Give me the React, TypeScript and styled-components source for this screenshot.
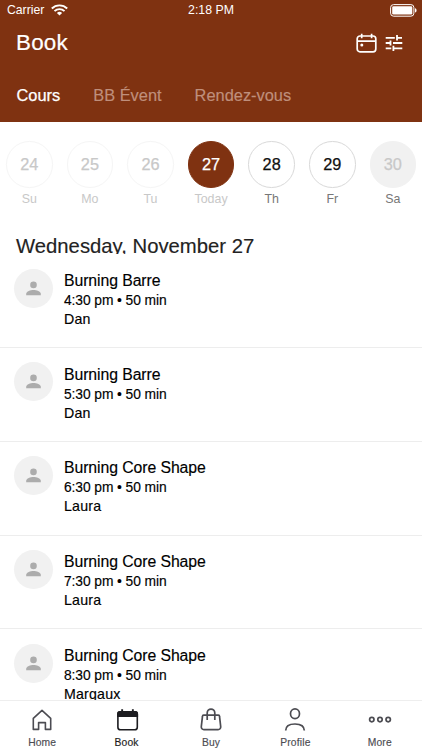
import React from "react";
import styled, { createGlobalStyle } from "styled-components";

const GlobalStyle = createGlobalStyle`
  * { box-sizing: border-box; }
  body { margin: 0; background: #fff; }
`;

const Screen = styled.div`
  width: 422px;
  height: 750px;
  display: flex;
  flex-direction: column;
  overflow: hidden;
  background: #fff;
  color: #111;
  font-family: "Liberation Sans", Arial, sans-serif;
  white-space: nowrap;
`;

const Header = styled.header`
  flex: none;
  height: 122px;
  background: #7f3211;
  color: #fff;
`;

const StatusBar = styled.div`
  height: 20px;
  padding: 0 5px 0 7px;
  display: grid;
  grid-template-columns: 1fr auto 1fr;
  align-items: center;
  font-size: 12.2px;
  line-height: 20px;
`;

const Carrier = styled.div`
  display: flex;
  align-items: center;
  gap: 7px;
`;

const Clock = styled.div`
  font-size: 12.3px;
  margin-right: 2px;
`;

const Battery = styled.div`
  justify-self: end;
  display: flex;
`;

const TitleBar = styled.div`
  height: 46px;
  padding: 0 19px 0 16px;
  display: flex;
  align-items: center;
  justify-content: space-between;
`;

const Title = styled.h1`
  margin: 0;
  font-size: 22.4px;
  font-weight: 400;
  letter-spacing: 0.2px;
  line-height: 26px;
  -webkit-text-stroke: 0.2px #fff;
`;

const Actions = styled.div`
  display: flex;
  align-items: center;
  gap: 8px;
  padding-bottom: 1px;
`;

const Tabs = styled.nav`
  height: 56px;
  padding: 19px 0 0 16.5px;
  display: flex;
  gap: 33px;
`;

const Tab = styled.span<{ $active?: boolean; $spacing?: number }>`
  font-size: 16.4px;
  line-height: 20px;
  letter-spacing: ${(p) => p.$spacing ?? 0}px;
  color: ${(p) => (p.$active ? "#fff" : "#bf8f7c")};
  -webkit-text-stroke: ${(p) => (p.$active ? "0.25px #fff" : "0.15px #bf8f7c")};
`;

const Week = styled.div`
  flex: none;
  height: 112px;
  padding-top: 19px;
  margin-left: -1px;
  display: grid;
  grid-template-columns: repeat(7, 60.6px);
`;

const Day = styled.div`
  display: flex;
  flex-direction: column;
  align-items: center;
`;

type DayKind = "past" | "today" | "open" | "closed";

const circleColors: Record<DayKind, [string, string, string]> = {
  past: ["#fff", "#f5f5f5", "#c8c8c8"],
  today: ["#7f3211", "#7f3211", "#fff"],
  open: ["#fff", "#d9d9d9", "#111"],
  closed: ["#f1f1f1", "#f1f1f1", "#c8c8c8"],
};

const Circle = styled.div<{ $kind: DayKind }>`
  width: 46.5px;
  height: 46.5px;
  border-radius: 50%;
  display: flex;
  align-items: center;
  justify-content: center;
  font-size: 16.3px;
  background: ${(p) => circleColors[p.$kind][0]};
  border: 1px solid ${(p) => circleColors[p.$kind][1]};
  color: ${(p) => circleColors[p.$kind][2]};
  -webkit-text-stroke: 0.25px;
`;

const Weekday = styled.div<{ $muted: boolean }>`
  margin-top: 3px;
  font-size: 12.4px;
  line-height: 16px;
  color: ${(p) => (p.$muted ? "#c8c8c8" : "#777")};
`;

const DateHeading = styled.h2`
  flex: none;
  margin: 0;
  height: 20.4px;
  padding-left: 16px;
  overflow: hidden;
  font-size: 20.3px;
  font-weight: 400;
  line-height: 25px;
  color: #222;
  -webkit-text-stroke: 0.15px;
`;

const ClassList = styled.main`
  flex: 1;
  min-height: 0;
  overflow: hidden;
`;

const ClassRow = styled.div`
  height: 93.75px;
  padding: 14.2px 0 0 14px;
  display: flex;
  gap: 11px;
  border-bottom: 1px solid #ededed;
`;

const Avatar = styled.div`
  width: 39px;
  height: 39px;
  border-radius: 50%;
  background: #f1f1f1;
  display: flex;
  align-items: center;
  justify-content: center;
`;

const Details = styled.div`
  padding-top: 2.3px;
  color: #000;
  -webkit-text-stroke: 0.15px;
`;

const ClassName = styled.div`
  font-size: 15.8px;
  line-height: 20px;
  letter-spacing: -0.08px;
`;

const ClassTime = styled.div`
  font-size: 13.8px;
  line-height: 19px;
  letter-spacing: -0.08px;
`;

const Teacher = styled.div`
  font-size: 14.2px;
  line-height: 19px;
  letter-spacing: 0.2px;
`;

const BottomNav = styled.nav`
  flex: none;
  height: 50px;
  border-top: 1px solid #eee;
  background: #fff;
  display: grid;
  grid-template-columns: repeat(5, 1fr);
`;

const NavItem = styled.div<{ $active?: boolean }>`
  padding-top: 6px;
  display: flex;
  flex-direction: column;
  align-items: center;
  gap: 3px;
  font-size: 10.3px;
  line-height: 13px;
  letter-spacing: 0.15px;
  color: ${(p) => (p.$active ? "#1c1c20" : "#4c4c52")};
  -webkit-text-stroke: 0.15px;
`;

const WifiIcon = () => (
  <svg width="17" height="12" viewBox="0 0 17 12" fill="none" stroke="#fff" strokeWidth="1.9">
    <path d="M.8 4.5a11 11 0 0 1 15.4 0M3.5 7.2a7.1 7.1 0 0 1 10 0" />
    <path d="M8.5 11.6 5.9 9a3.7 3.7 0 0 1 5.2 0z" fill="#fff" stroke="none" />
  </svg>
);

const BatteryIcon = () => (
  <svg width="27" height="13" viewBox="0 0 27 13">
    <rect x=".6" y=".6" width="23.3" height="11.6" rx="3" fill="none" stroke="#fff" />
    <rect x="2.2" y="2.2" width="20.1" height="8.4" rx="1.3" fill="#fff" />
    <path d="M25 4.3c2.1.7 2.1 3.5 0 4.2z" fill="#fff" />
  </svg>
);

const CalendarIcon = () => (
  <svg width="21" height="20" viewBox="0 0 21 20" fill="none" stroke="#fff" strokeWidth="1.7">
    <rect x="1.2" y="3" width="18.6" height="15.8" rx="2.8" />
    <path d="M1.2 8.2h18.6M5.7 .8v4.4M15.6 .8v4.4" />
    <circle cx="5.8" cy="12.1" r="1.5" fill="#fff" stroke="none" />
  </svg>
);

const TuneIcon = () => (
  <svg width="18" height="18" viewBox="0 0 18 18" fill="none" stroke="#fff" strokeWidth="1.8">
    <path d="M.7 3.8h9.1M12 1v5.5M12 3.8h5M.7 9h4.8M5.5 6.4v5.2M8 9h9.3M.7 14.3h5.6M8.4 11.8V17M8.4 14.3h8.9" />
  </svg>
);

const PersonIcon = () => (
  <svg width="15" height="15" viewBox="0 0 15 15" fill="#acacac">
    <circle cx="7.5" cy="3.9" r="3.3" />
    <path d="M.2 14.3v-1.6c0-2.4 4.3-3.8 7.3-3.8s7.3 1.4 7.3 3.8v1.6z" />
  </svg>
);

const navIcons = {
  Home: (
    <path d="M4.3 11.4 13 3.3l8.7 8.1v11h-5.3v-6.8H9.6v6.8H4.3z" fill="none" stroke="currentColor" strokeWidth="1.6" strokeLinejoin="round" />
  ),
  Book: (
    <>
      <rect x="3.9" y="4.7" width="19.4" height="18.1" rx="2.6" fill="none" stroke="currentColor" strokeWidth="1.6" />
      <path d="M3.1 10V6.7a2.8 2.8 0 0 1 2.8-2.8h1.3V2.2h1.9v1.7h8.8V2.2h1.9v1.7h1.5a2.8 2.8 0 0 1 2.8 2.8V10z" fill="currentColor" />
    </>
  ),
  Buy: (
    <path d="M5.6 8.2h14.8c.6 0 1.1.4 1.1 1l1.2 10.5c.2 1.6-1 2.9-2.6 2.9H5.9c-1.6 0-2.8-1.3-2.6-2.9L4.5 9.2c0-.6.5-1 1.1-1zM9.2 13V5.9a3.8 3.8 0 0 1 7.6 0V13" fill="none" stroke="currentColor" strokeWidth="1.7" />
  ),
  Profile: (
    <g fill="none" stroke="currentColor" strokeWidth="1.7">
      <ellipse cx="13" cy="6.8" rx="4.5" ry="4.9" />
      <path d="M3.7 23.6c0-4.2 3.2-6.6 9.3-6.6s9.3 2.4 9.3 6.6" />
    </g>
  ),
  More: (
    <g fill="none" stroke="currentColor" strokeWidth="1.7">
      <circle cx="4.8" cy="12.6" r="2.2" />
      <circle cx="13" cy="12.6" r="2.2" />
      <circle cx="21.2" cy="12.6" r="2.2" />
    </g>
  ),
};

const days: { date: number; label: string; kind: DayKind }[] = [
  { date: 24, label: "Su", kind: "past" },
  { date: 25, label: "Mo", kind: "past" },
  { date: 26, label: "Tu", kind: "past" },
  { date: 27, label: "Today", kind: "today" },
  { date: 28, label: "Th", kind: "open" },
  { date: 29, label: "Fr", kind: "open" },
  { date: 30, label: "Sa", kind: "closed" },
];

const classes = [
  { name: "Burning Barre", time: "4:30 pm", teacher: "Dan" },
  { name: "Burning Barre", time: "5:30 pm", teacher: "Dan" },
  { name: "Burning Core Shape", time: "6:30 pm", teacher: "Laura" },
  { name: "Burning Core Shape", time: "7:30 pm", teacher: "Laura" },
  { name: "Burning Core Shape", time: "8:30 pm", teacher: "Margaux" },
];

export default function App() {
  return (
    <>
      <GlobalStyle />
      <Screen>
        <Header>
          <StatusBar>
            <Carrier>Carrier<WifiIcon /></Carrier>
            <Clock>2:18 PM</Clock>
            <Battery><BatteryIcon /></Battery>
          </StatusBar>
          <TitleBar>
            <Title>Book</Title>
            <Actions><CalendarIcon /><TuneIcon /></Actions>
          </TitleBar>
          <Tabs>
            <Tab $active>Cours</Tab>
            <Tab>BB Évent</Tab>
            <Tab>Rendez-vous</Tab>
          </Tabs>
        </Header>
        <Week>
          {days.map((d) => (
            <Day key={d.date}>
              <Circle $kind={d.kind}>{d.date}</Circle>
              <Weekday $muted={d.kind === "past" || d.kind === "today"}>{d.label}</Weekday>
            </Day>
          ))}
        </Week>
        <DateHeading>Wednesday, November 27</DateHeading>
        <ClassList>
          {classes.map((c) => (
            <ClassRow key={c.time}>
              <Avatar><PersonIcon /></Avatar>
              <Details>
                <ClassName>{c.name}</ClassName>
                <ClassTime>{c.time} • 50 min</ClassTime>
                <Teacher>{c.teacher}</Teacher>
              </Details>
            </ClassRow>
          ))}
        </ClassList>
        <BottomNav>
          {(Object.keys(navIcons) as (keyof typeof navIcons)[]).map((name) => (
            <NavItem key={name} $active={name === "Book"}>
              <svg width="26" height="26" viewBox="0 0 26 26">{navIcons[name]}</svg>
              {name}
            </NavItem>
          ))}
        </BottomNav>
      </Screen>
    </>
  );
}
